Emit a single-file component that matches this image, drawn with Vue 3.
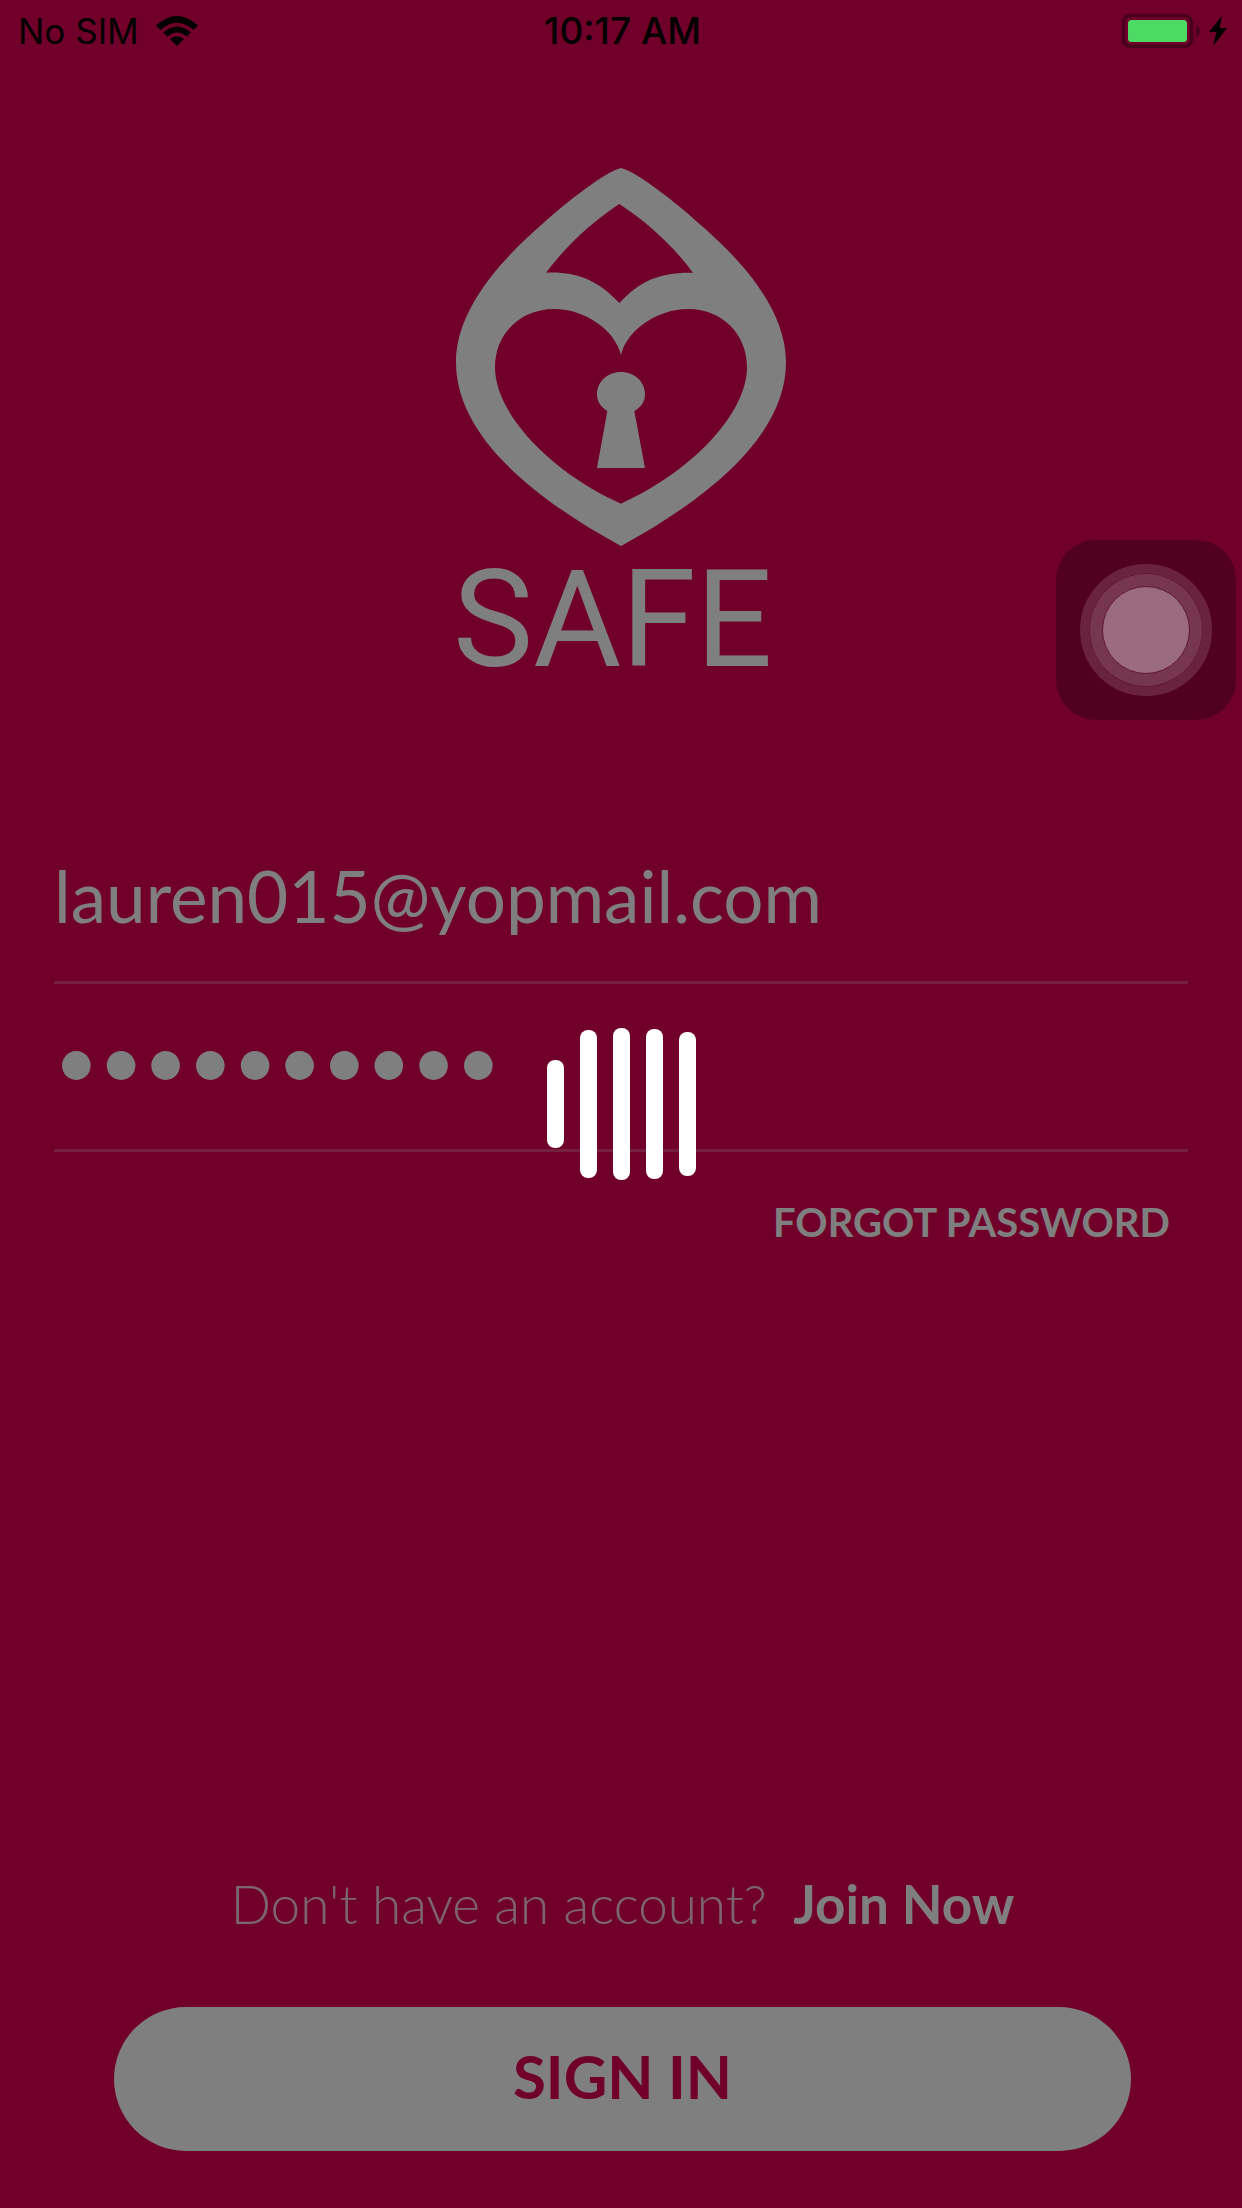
<script setup>
import { ref } from 'vue'

const email = ref('lauren015@yopmail.com')
const password = ref('safe-heart')
const bars = [88, 148, 152, 150, 144]
</script>

<template>
  <div class="screen">
    <header class="status">
      <div class="carrier">
        <span>No SIM</span>
        <svg class="wifi" viewBox="0 0 42 30" aria-hidden="true">
          <path d="M0 9.500Q21-9.500 42 9.500L37.500 14Q21-.5 4.500 14Z" />
          <path d="M7 16.500Q21 4.500 35 16.500L30.500 20.500Q21 12.500 11.500 20.500Z" />
          <path d="M14 23Q21 17.500 28 23L21 30Z" />
        </svg>
      </div>
      <time>10:17 AM</time>
      <div class="power">
        <svg class="battery" viewBox="0 0 78 34" aria-hidden="true">
          <rect x="1.500" y="1.500" width="68" height="31" rx="7" fill="none" stroke="#48001c" stroke-width="3.500" />
          <rect x="6" y="6" width="59" height="22" rx="3.500" fill="#4cd964" />
          <path d="M74 11Q78 13 78 17T74 23Z" fill="#48001c" />
        </svg>
        <svg class="bolt" viewBox="0 0 18 30" aria-hidden="true">
          <path d="M13 0L0 16H7.500L4 30L18 12H10.500Z" />
        </svg>
      </div>
    </header>

    <main class="login">
      <div class="brand">
        <svg class="logo" viewBox="48 54 990 1134" aria-hidden="true">
          <path
            fill-rule="evenodd"
            d="M543 54C590 66 700 150 790 232C860 294 1038 455 1038 637C1038 830 860 1015 543 1188C226 1015 48 830 48 637C48 455 226 294 296 232C386 150 496 66 543 54Z
               M538 162C460 213 380 285 318 368C410 364 475 392 538 459C600 392 660 366 759 368C705 295 630 222 538 162Z
               M543 615C525 540 435 477 343 477C240 477 165 552 165 652C165 790 330 965 543 1061C756 965 921 790 921 652C921 552 846 477 745 477C651 477 561 540 543 615Z"
          />
          <path d="M502 783C483 772 471 755 471 733C471 695 502 666 543 666C584 666 615 695 615 733C615 755 603 772 583 783L615 954H471Z" />
        </svg>
        <h1>SAFE</h1>
      </div>

      <form id="sign-in" class="fields" @submit.prevent>
        <input v-model="email" class="field email" type="email" aria-label="Email" />
        <input v-model="password" class="field password" type="password" aria-label="Password" />
        <a class="forgot" href="#forgot">FORGOT PASSWORD</a>
      </form>

      <footer class="actions">
        <p>Don't have an account? <a href="#join">Join Now</a></p>
        <button type="submit" form="sign-in">SIGN IN</button>
      </footer>
    </main>

    <div class="overlay" role="status" aria-label="Loading">
      <i v-for="(h, i) in bars" :key="i" :style="{ height: h + 'px' }"></i>
    </div>

    <button class="assist" type="button" aria-label="AssistiveTouch"><span><b></b></span></button>
  </div>
</template>

<style>
body {
  margin: 0;
  background: #700029;
}
</style>

<style scoped>
.screen {
  position: relative;
  display: flex;
  flex-direction: column;
  min-height: 100vh;
  background: #e00052;
  color: #fff;
  font-family: Lato, "Open Sans", sans-serif;
}

.status {
  position: relative;
  z-index: 2;
  display: grid;
  grid-template-columns: 1fr auto 1fr;
  align-items: center;
  height: 62px;
  padding: 0 15px 0 18px;
  color: #000;
  font: 400 35px/62px Inter, sans-serif;
}

.status time {
  font-size: 37px;
  font-weight: 500;
}

.carrier,
.power {
  display: flex;
  align-items: center;
}

.carrier {
  gap: 17px;
}

.power {
  justify-content: flex-end;
  gap: 9px;
}

.wifi {
  width: 42px;
  height: 30px;
}

.battery {
  width: 78px;
  height: 34px;
}

.bolt {
  width: 18px;
  height: 30px;
}

.login {
  flex: 1;
  display: flex;
  flex-direction: column;
}

.brand {
  width: 336px;
  margin: 106px auto 0;
}

.logo {
  display: block;
  width: 330px;
  height: 378px;
  margin: 0 auto;
  fill: #fff;
}

h1 {
  margin: 0;
  font: 400 135px/148px Roboto, sans-serif;
}

.fields {
  display: flex;
  flex-direction: column;
  margin: 122px 54px 0;
}

.field {
  box-sizing: border-box;
  width: 100%;
  height: 168px;
  padding: 0 0 6px;
  border: 0;
  border-bottom: 3px solid rgba(255, 255, 255, 0.25);
  border-radius: 0;
  outline: 0;
  background: none;
  color: #fff;
}

.email {
  font: 400 71px/84px Lato, sans-serif;
}

.password {
  padding-bottom: 16px;
  font: 400 77px/84px Lato, sans-serif;
}

.forgot {
  align-self: flex-end;
  margin: 46px 18px 0 0;
  color: #fff;
  font-size: 40px;
  font-weight: 700;
  line-height: 48px;
  text-decoration: none;
}

.actions {
  display: flex;
  flex-direction: column;
  margin: auto 111px 57px 114px;
  text-align: center;
}

.actions p {
  margin: 0 0 73px;
  color: rgba(255, 255, 255, 0.8);
  font-size: 53px;
  font-weight: 300;
  line-height: 60px;
}

.actions a {
  margin-left: 12px;
  color: #fff;
  font-weight: 700;
  text-decoration: none;
}

.actions button {
  height: 144px;
  padding: 0 0 6px;
  border: 0;
  border-radius: 72px;
  background: #fff;
  color: #e00052;
  font: 700 60px/72px Lato, sans-serif;
}

.overlay {
  position: absolute;
  inset: 0;
  z-index: 1;
  display: flex;
  align-items: center;
  justify-content: center;
  gap: 16px;
  background: rgba(0, 0, 0, 0.5);
}

.overlay i {
  width: 17px;
  border-radius: 8px;
  background: #fff;
}

.assist {
  position: absolute;
  top: 540px;
  right: 6px;
  z-index: 3;
  display: grid;
  place-items: center;
  width: 180px;
  height: 180px;
  padding: 0;
  border: 0;
  border-radius: 40px;
  background: #520020;
}

.assist span {
  display: grid;
  place-items: center;
  box-sizing: border-box;
  width: 132px;
  height: 132px;
  border: 9px solid #69233f;
  border-radius: 50%;
  background: #77364f;
  box-shadow: inset 0 0 0 1px #5f1734;
}

.assist b {
  width: 86px;
  height: 86px;
  border: 1px solid #5f1734;
  border-radius: 50%;
  background: #996b7d;
}
</style>
